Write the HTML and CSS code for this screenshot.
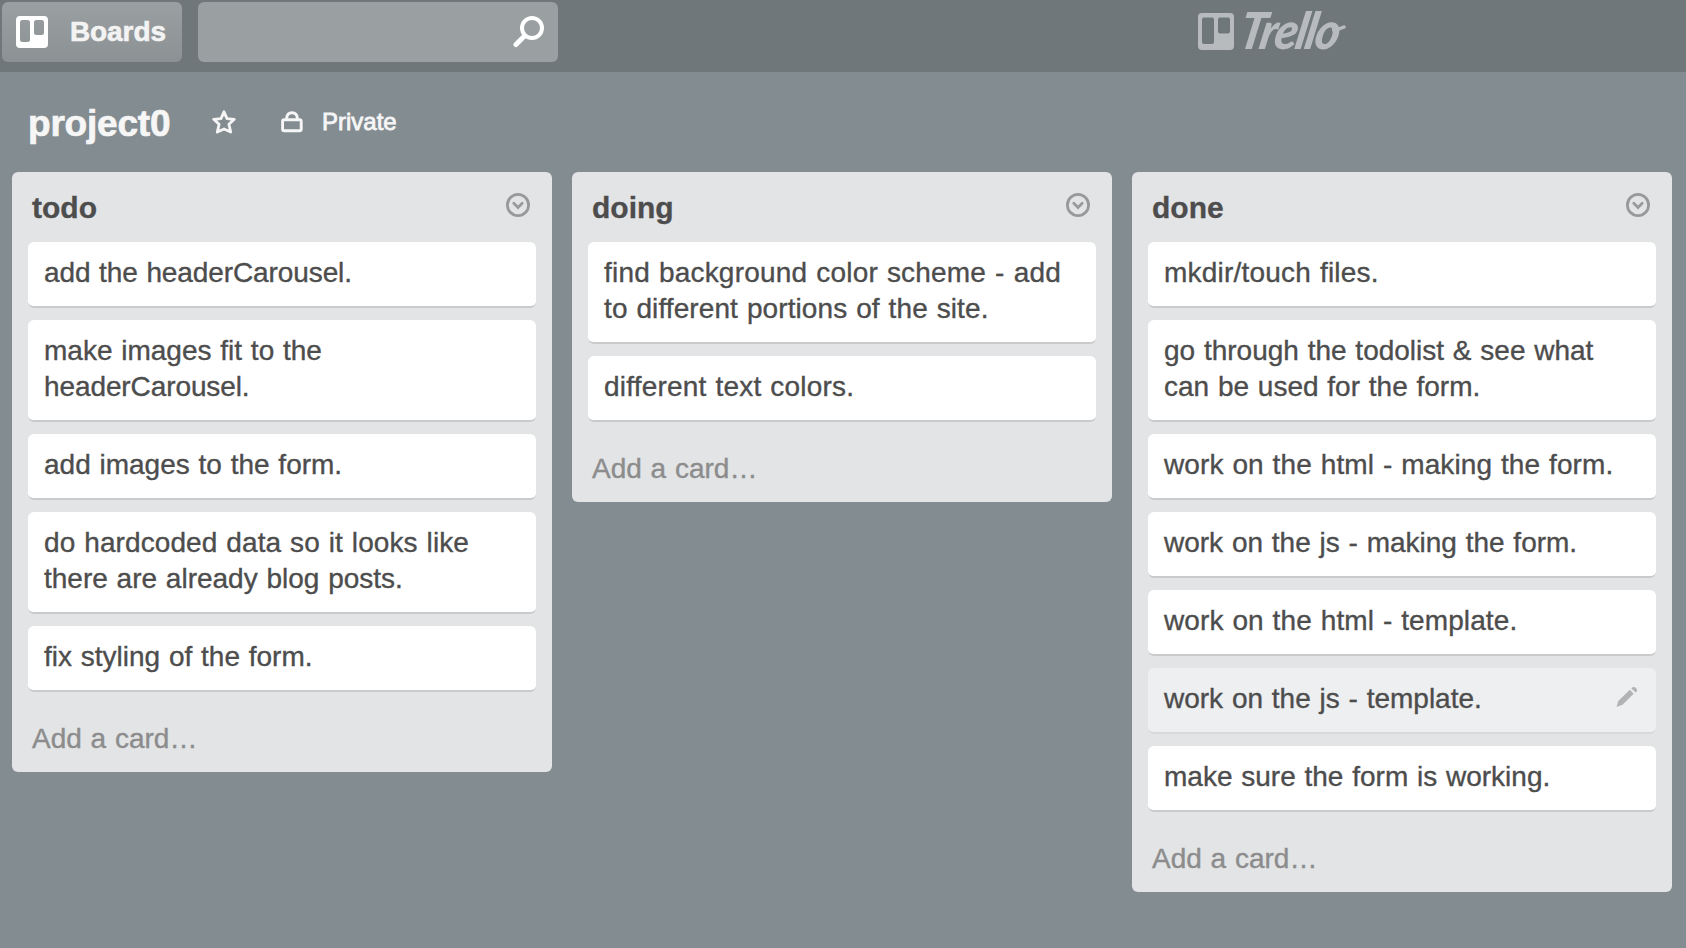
FILE: index.html
```html
<!DOCTYPE html>
<html lang="en">
<head>
<meta charset="utf-8">
<title>project0 | Trello</title>
<link rel="stylesheet" href="styles.css">
</head>
<body>
<svg width="0" height="0" class="defs" aria-hidden="true">
  <symbol id="menu" viewBox="0 0 24 24"><circle cx="12" cy="12" r="10.6" fill="none" stroke="currentColor" stroke-width="2.8"/><path d="M7.800 10.200l4.200 4.200 4.200-4.200" fill="none" stroke="currentColor" stroke-width="2.8" stroke-linecap="round"/></symbol>
</svg>
<header class="topbar">
  <div class="tools">
    <button class="boards">
      <svg class="boards-icon" width="32" height="32" viewBox="0 0 32 32"><path fill="currentColor" fill-rule="evenodd" d="M4 0H28Q32 0 32 4V28Q32 32 28 32H4Q0 32 0 28V4Q0 0 4 0ZM6.500 4Q4 4 4 6.500V23.500Q4 26 6.500 26H11.500Q14 26 14 23.500V6.500Q14 4 11.500 4ZM20.500 4Q18 4 18 6.500V16.500Q18 19 20.500 19H25.500Q28 19 28 16.500V6.500Q28 4 25.500 4Z"/></svg>
      <span class="boards-label">Boards</span>
    </button>
    <div class="search">
      <svg width="32" height="32" viewBox="0 0 32 32"><g fill="none" stroke="currentColor"><circle cx="19" cy="12" r="10" stroke-width="4"/><path d="M11.500 20L3 28.500" stroke-width="5" stroke-linecap="round"/></g></svg>
    </div>
  </div>
  <div class="logo">
    <svg width="36" height="37" viewBox="0 0 36 37"><path fill="currentColor" fill-rule="evenodd" d="M4 0H32Q36 0 36 4V33Q36 37 32 37H4Q0 37 0 33V4Q0 0 4 0ZM6 4.500Q4 4.500 4 6.500V29Q4 31 6 31H14Q16 31 16 29V6.500Q16 4.500 14 4.500ZM22 4.500Q20 4.500 20 6.500V18.500Q20 20.500 22 20.500H30Q32 20.500 32 18.500V6.500Q32 4.500 30 4.500Z"/></svg>
    <span class="wordmark">Trello</span>
    <svg class="swash" width="14" height="8" viewBox="0 0 14 8"><path d="M1 5.500Q6 6 12 3" fill="none" stroke="currentColor" stroke-width="3.500" stroke-linecap="round"/></svg>
  </div>
</header>
<div class="board-header">
  <h1>project0</h1>
  <svg class="star" width="24" height="24" viewBox="0 0 24 24"><path d="M12 1.800L15 8.600L22.300 9.300L16.900 14.200L18.700 22.100L12 19L5.300 22.100L7.100 14.200L1.700 9.300L9 8.600Z" fill="none" stroke="currentColor" stroke-width="2.800" stroke-linejoin="round"/></svg>
  <svg class="lock" width="22" height="22" viewBox="0 0 22 22"><g fill="none" stroke="currentColor" stroke-width="2.900"><rect x="1.600" y="8.700" width="18.600" height="11" rx="1.500"/><path d="M5.700 8.500V7Q6 1.700 11 1.700T16.300 7V8.500"/></g></svg>
  <span class="visibility">Private</span>
</div>
<main class="board">
  <section class="list">
    <div class="list-head"><h2>todo</h2><svg width="24" height="24"><use href="#menu"/></svg></div>
    <div class="card tight">add the headerCarousel.</div>
    <div class="card">make images fit to the<br><span class="tight">headerCarousel.</span></div>
    <div class="card">add images to the form.</div>
    <div class="card"><span class="loose">do hardcoded data so it looks like</span><br>there are already blog posts.</div>
    <div class="card">fix styling of the form.</div>
    <div class="add">Add a card…</div>
  </section>
  <section class="list">
    <div class="list-head"><h2>doing</h2><svg width="24" height="24"><use href="#menu"/></svg></div>
    <div class="card loose"><span class="wide">find background color scheme - add</span><br>to different portions of the site.</div>
    <div class="card wide">different text colors.</div>
    <div class="add">Add a card…</div>
  </section>
  <section class="list">
    <div class="list-head"><h2>done</h2><svg width="24" height="24"><use href="#menu"/></svg></div>
    <div class="card wide">mkdir/touch files.</div>
    <div class="card">go through the todolist &amp; see what<br>can be used for the form.</div>
    <div class="card loose">work on the html - making the form.</div>
    <div class="card">work on the js - making the form.</div>
    <div class="card loose">work on the html - template.</div>
    <div class="card active"><span>work on the js - template.</span><svg width="22" height="22" viewBox="0 0 22 22"><path fill="currentColor" d="M.500 21L2.300 15L13.800 3.800L17.700 7.700L6.500 18.800ZM15.400 2.400Q17.300 -.2 19.800 1.800Q22 4 20.300 6.200L19.300 6.300Z"/></svg></div>
    <div class="card">make sure the form is working.</div>
    <div class="add">Add a card…</div>
  </section>
</main>
</body>
</html>
```
FILE: styles.css
```css
* { box-sizing: border-box; }
body {
  margin: 0;
  height: 948px;
  overflow: hidden;
  background: #838c91;
  color: #4d4d4d;
  font: 28px/36px "Liberation Sans", Arial, sans-serif;
}
h1, h2 { margin: 0; }
svg { display: block; flex: none; }
.defs { position: absolute; }
.topbar {
  display: flex;
  justify-content: space-between;
  height: 72px;
  padding: 2px 340px 0 2px;
  background: #6f777a;
}
.tools { display: flex; gap: 16px; }
.boards {
  display: flex;
  align-items: center;
  width: 180px;
  height: 60px;
  padding: 0 0 0 14px;
  border: 0;
  border-radius: 6px;
  background: linear-gradient(#9a9fa1, #8c9194);
  color: #fff;
  font: bold 28px/36px "Liberation Sans", Arial, sans-serif;
}
.boards-label {
  margin: 0 0 0 22px;
  color: #f3f3f3;
  letter-spacing: -.1px;
  -webkit-text-stroke: .6px;
}
.search {
  display: flex;
  align-items: center;
  justify-content: flex-end;
  width: 360px;
  height: 60px;
  padding-right: 13px;
  border-radius: 6px;
  background: #9a9fa1;
  color: #fff;
}
.logo { position: relative; display: flex; width: 148px; padding-top: 11px; color: #b7bbbd; }
.wordmark {
  margin: -7px 0 0 5px;
  font: italic 900 51px/48px Lato, sans-serif;
  letter-spacing: -2px;
  transform: scaleX(.92) skewX(-12deg);
  transform-origin: 0 50%;
}
.swash { position: absolute; left: 134px; top: 22px; }
.board-header {
  display: flex;
  height: 100px;
  padding: 34px 0 0 28px;
  color: #f6f6f6;
}
h1 {
  width: 184px;
  font-size: 37px;
  line-height: 36px;
  letter-spacing: -.2px;
  -webkit-text-stroke: .7px;
}
.star { margin-top: 4px; }
.lock { margin: 5px 0 0 45px; }
.visibility { margin-left: 19px; font-size: 24px; line-height: 32px; -webkit-text-stroke: .8px; }
.board { display: flex; align-items: flex-start; gap: 20px; padding-left: 12px; }
.list {
  flex: none;
  width: 540px;
  padding: 0 16px 16px;
  border-radius: 6px;
  background: #e2e4e6;
}
.list-head {
  display: flex;
  justify-content: space-between;
  height: 70px;
  padding: 18px 6px 0 4px;
}
.list-head svg { margin-top: 3px; color: #999; }
h2 { font-size: 30px; line-height: 36px; letter-spacing: 0; -webkit-text-stroke: .3px; }
.card {
  display: flow-root;
  margin-bottom: 12px;
  padding: 13px 0 15px 16px;
  border-radius: 6px;
  border-bottom: 2px solid #c8cacb;
  background: #fff;
  white-space: nowrap;
  word-spacing: 1px;
  -webkit-text-stroke: .35px;
}
.tight { letter-spacing: -.1px; }
.loose { letter-spacing: .1px; }
.wide { letter-spacing: .2px; }
.card.active {
  display: flex;
  justify-content: space-between;
  padding-right: 18px;
  border-color: #d6dadc;
  background-color: #edeff0;
}
.active svg { margin-top: 5px; color: #b3b3b3; }
.add { padding: 17px 0 0 4px; margin-bottom: -1px; color: #8c8c8c; word-spacing: 1px; -webkit-text-stroke: .35px; }
```
